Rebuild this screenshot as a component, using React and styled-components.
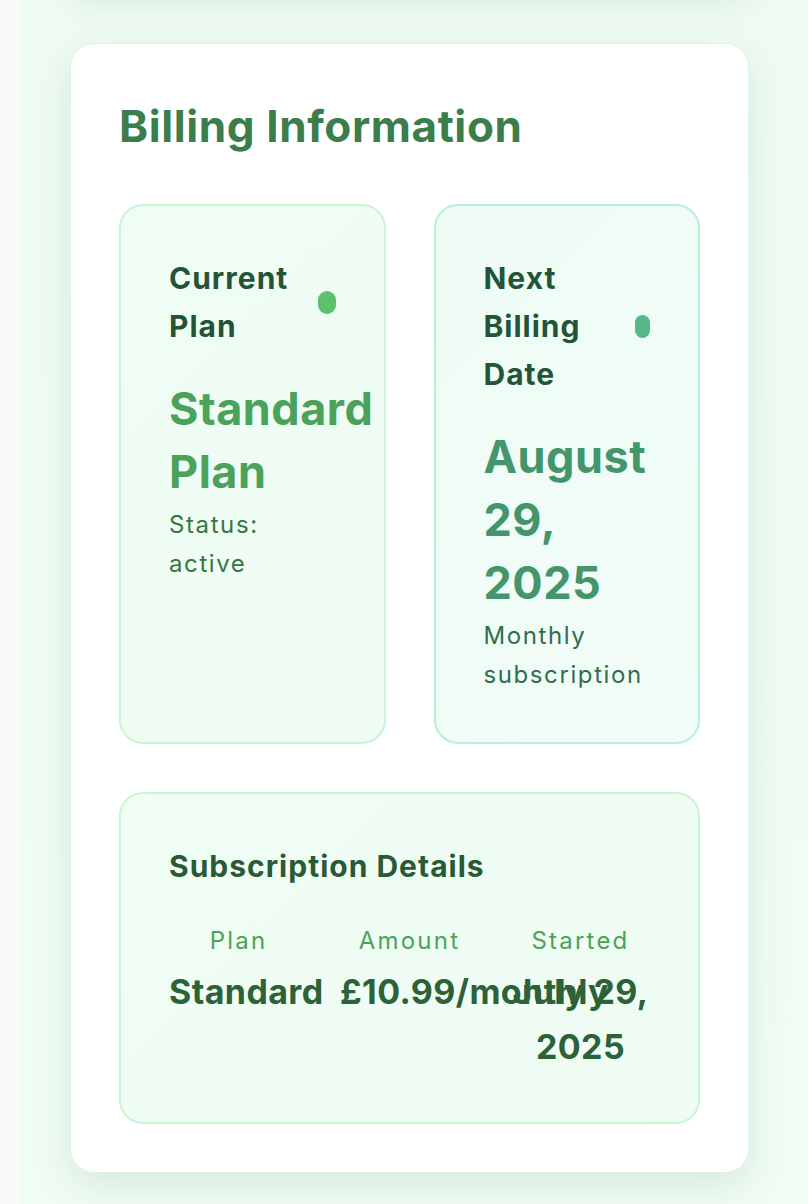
import React from 'react';
import styled, { createGlobalStyle } from 'styled-components';

const GlobalStyle = createGlobalStyle`
  html, body {
    margin: 0;
    padding: 0;
    background: #f8fafc;
    font-family: Inter, "Noto Sans", "Liberation Sans", sans-serif;
  }
  * { box-sizing: border-box; }
`;

const Shell = styled.div`
  padding-left: 20px;
  min-height: 1204px;
  overflow: hidden;
`;

const Main = styled.main`
  min-height: 1204px;
  background: linear-gradient(180deg, #effcf3 0%, #f0fdf5 100%);
  padding: 0 59px 60px 50px;
`;

const PrevCard = styled.section`
  height: 40px;
  margin-top: -54px;
  margin-bottom: 57px;
  background: #ffffff;
  border-radius: 24px;
  box-shadow: 0 12px 40px rgba(40, 80, 55, 0.14);
`;

const Card = styled.section`
  background: #ffffff;
  border: 1px solid #d8f7e1;
  border-radius: 24px;
  padding: 50px 48px 48px;
  box-shadow: 0 12px 40px rgba(40, 80, 55, 0.12);
`;

const Title = styled.h2`
  margin: 0 0 46px;
  font-size: 44px;
  line-height: 64px;
  font-weight: 700;
  color: #3b7d4b;
  letter-spacing: 0.6px;
`;

const Grid = styled.div`
  display: grid;
  grid-template-columns: repeat(2, minmax(0, 1fr));
  gap: 48px;
`;

const InfoCard = styled.div`
  border: 2px solid ${(p) => p.$border};
  border-radius: 24px;
  padding: 48px;
  background: ${(p) => p.$bg};
  grid-column: ${(p) => (p.$wide ? '1 / -1' : 'auto')};
`;

const Head = styled.div`
  display: flex;
  align-items: center;
  justify-content: space-between;
  gap: 16px;
  margin-bottom: 27px;
`;

const Label = styled.h3`
  margin: 0;
  font-size: 30px;
  line-height: 48px;
  font-weight: 700;
  color: #245437;
  letter-spacing: 1px;
`;

const Dot = styled.span`
  flex: none;
  width: ${(p) => p.$w}px;
  height: 23px;
  border-radius: 10px;
  background: ${(p) => p.$color};
`;

const Value = styled.div`
  font-size: 45px;
  line-height: 63px;
  font-weight: 700;
  color: ${(p) => p.$color};
  letter-spacing: 0.5px;
  margin-bottom: 3px;
`;

const Meta = styled.div`
  font-size: 24px;
  line-height: 38.5px;
  letter-spacing: 1.6px;
  color: ${(p) => p.$color};
`;

const SubTitle = styled.h3`
  margin: 0 0 32px;
  font-size: 30px;
  line-height: 48px;
  font-weight: 700;
  color: #2a5a35;
  letter-spacing: 1px;
`;

const DetailGrid = styled.div`
  display: grid;
  grid-template-columns: repeat(3, minmax(0, 1fr));
  gap: 32px;
  text-align: center;
`;

const Detail = styled.div`
  display: flex;
  flex-direction: column;
  gap: 4px;
`;

const DetailLabel = styled.span`
  font-size: 24px;
  line-height: 38px;
  letter-spacing: 2.2px;
  color: #4aa357;
`;

const DetailValue = styled.span`
  font-size: 34px;
  line-height: 55px;
  font-weight: 700;
  letter-spacing: 0.4px;
  color: #2d6138;
`;

const details = [
  { label: 'Plan', value: 'Standard' },
  { label: 'Amount', value: '£10.99/monthly' },
  { label: 'Started', value: 'July 29, 2025' },
];

export default function App() {
  return (
    <Shell>
      <GlobalStyle />
      <Main>
        <PrevCard />
        <Card>
          <Title>Billing Information</Title>
          <Grid>
            <InfoCard $border="#c8f5d5" $bg="linear-gradient(135deg, #f0fdf4 0%, #eefcf3 100%)">
              <Head>
                <Label>Current Plan</Label>
                <Dot $w={18} $color="#5dc06a" />
              </Head>
              <Value $color="#4ba25a">Standard Plan</Value>
              <Meta $color="#34783f">Status: active</Meta>
            </InfoCard>
            <InfoCard $border="#b8f0d2" $bg="linear-gradient(135deg, #effcf6 0%, #f2fcf8 100%)">
              <Head>
                <Label>Next Billing Date</Label>
                <Dot $w={15} $color="#54b887" />
              </Head>
              <Value $color="#44956b">August 29, 2025</Value>
              <Meta $color="#2f6e4f">Monthly subscription</Meta>
            </InfoCard>
            <InfoCard $wide $border="#c8f5d5" $bg="linear-gradient(135deg, #f0fdf4 0%, #eefcf4 100%)">
              <SubTitle>Subscription Details</SubTitle>
              <DetailGrid>
                {details.map((d) => (
                  <Detail key={d.label}>
                    <DetailLabel>{d.label}</DetailLabel>
                    <DetailValue>{d.value}</DetailValue>
                  </Detail>
                ))}
              </DetailGrid>
            </InfoCard>
          </Grid>
        </Card>
      </Main>
    </Shell>
  );
}
